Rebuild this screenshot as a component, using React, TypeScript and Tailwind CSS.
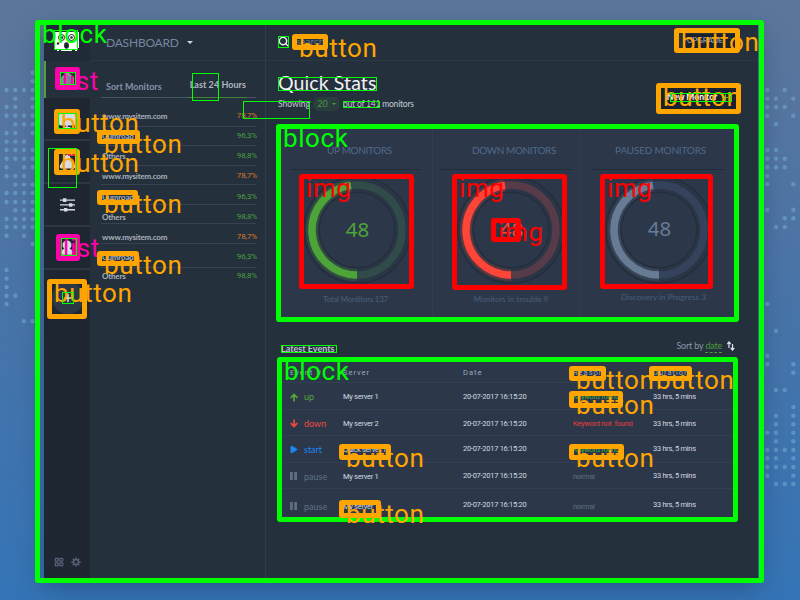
import React from "react";
import { ChevronRight, Home, LayoutGrid, Monitor, Play, Plus, Search, TriangleAlert, UserRound } from "lucide-react";

type Box = { x: number; y: number; r: number; b: number; label: string; color: string };

const GREEN = "#00ff00";
const ORANGE = "#ffa500";
const RED = "#ff0000";
const PINK = "#ff00aa";

const box = (x: number, y: number, r: number, b: number, label: string, color: string): Box => ({ x, y, r, b, label, color });

const boxes: Box[] = [
  box(35, 20, 764, 583, "block", GREEN),
  box(276, 124, 739, 322, "block", GREEN),
  box(277, 357, 738, 522, "block", GREEN),
  box(299, 174, 414, 289, "img", RED),
  box(452, 174, 567, 290, "img", RED),
  box(600, 174, 713, 289, "img", RED),
  box(491, 218, 521, 242, "img", RED),
  box(55, 67, 80, 90, "list", PINK),
  box(56, 234, 80, 261, "list", PINK),
  box(54, 109, 80, 134, "button", ORANGE),
  box(54, 149, 80, 175, "button", ORANGE),
  box(97, 130, 140, 144, "button", ORANGE),
  box(97, 190, 138, 205, "button", ORANGE),
  box(97, 251, 139, 266, "button", ORANGE),
  box(47, 279, 87, 319, "button", ORANGE),
  box(292, 34, 328, 50, "button", ORANGE),
  box(674, 28, 740, 53, "button", ORANGE),
  box(656, 83, 741, 114, "button", ORANGE),
  box(339, 444, 391, 460, "button", ORANGE),
  box(339, 500, 381, 518, "button", ORANGE),
  box(569, 366, 606, 381, "button", ORANGE),
  box(649, 366, 692, 381, "button", ORANGE),
  box(569, 391, 623, 408, "button", ORANGE),
  box(569, 444, 624, 460, "button", ORANGE),
];

const thinBoxes: number[][] = [
  [54, 30, 78, 50], [60, 72, 76, 85], [58, 113, 77, 129], [48, 148, 77, 188],
  [61, 238, 77, 256], [62, 292, 74, 304], [192, 73, 219, 101], [243, 101, 310, 119],
  [278, 36, 289, 48], [278, 77, 377, 91], [343, 101, 380, 108], [670, 93, 732, 102], [281, 345, 337, 353],
];

const L = [6.6, 15.3, 24, 32.6];
const R = [767.3, 776, 784.7, 793.3];
const leftRows: [number, number[]][] = [
  [72.7, [3]], [81.3, [3]], [90, [0, 1, 2, 3]], [98.6, [1, 3]], [107, [0, 1, 3]], [115.7, [0, 1, 2, 3]],
  [124.3, [1, 2, 3]], [133, [0, 1, 3]], [141.6, [0, 1, 2]], [150, [0, 1, 2, 3]], [158.7, [0, 1, 2, 3]],
  [167.3, [0, 2, 3]], [176, [0, 1, 2]], [184.6, [1, 2, 3]], [193, [0, 1, 2, 3]], [202, [0, 1, 2, 3]],
  [210.3, [1, 2, 3]], [219, [0, 1, 2, 3]], [227, [0, 1, 2, 3]], [235.7, [0, 2]], [244, [3]],
  [270, [0]], [278.6, [0]], [287, [0]], [295.7, [0, 1]], [304, [0]], [321.3, [2, 3]],
];
const rightRows: [number, number[]][] = [
  [90, [0, 2]], [98.6, [0, 1, 3]], [107, [0, 1, 2]], [115.7, [0, 3]], [124.3, [1]], [150, [0, 1]],
  [158.7, [0, 1, 2]], [167.3, [0, 1, 2]], [176, [0]], [184.3, [0, 3]], [209.7, [0, 3]], [218.3, [2, 3]],
  [227, [1, 2]], [304, [0]], [331, [1]], [355.7, [0]], [364.3, [0, 3]], [372.7, [3]], [390, [1, 2]],
  [407, [3]], [415.7, [1, 3]], [424.3, [1, 3]], [432.7, [0, 1, 3]], [441.3, [1, 3]], [450, [0, 1, 2, 3]],
  [458.3, [0, 1, 3]], [467, [0, 1, 2, 3]], [475.7, [0, 3]], [484, [1, 2, 3]],
];

function Dots() {
  const draw = (rows: [number, number[]][], cols: number[]) =>
    rows.flatMap(([y, ids]) => ids.map((i) => <circle key={`${y}-${cols[i]}`} cx={cols[i]} cy={y} r="2.2" />));
  return (
    <svg className="absolute inset-0 blur-[0.6px]" width="800" height="600" fill="#78b6d8" fillOpacity="0.5">
      {draw(leftRows, L)}
      {draw(rightRows, R)}
    </svg>
  );
}

const sites = [
  { name: "www.mysitem.com", pct: "78,7%", h: 21, mid: 10 },
  { name: "Gumroad", pct: "96,3%", h: 19, mid: 9 },
  { name: "Others", pct: "98,8%", h: 20, mid: 10 },
  { name: "www.mysitem.com", pct: "78,7%", h: 19, mid: 10 },
  { name: "Gumroad", pct: "96,3%", h: 20, mid: 12 },
  { name: "Others", pct: "98,8%", h: 19, mid: 12 },
  { name: "www.mysitem.com", pct: "78,7%", h: 20, mid: 13 },
  { name: "Gumroad", pct: "96,3%", h: 24, mid: 13 },
  { name: "Others", pct: "98,8%", h: 20, mid: 8 },
];

function Gauge({ color, track, cy }: { color: string; track: string; cy: number }) {
  return (
    <svg width="114" height="114" viewBox="0 0 114 114" className="block">
      <circle cx="57" cy="57" r="45.5" fill="none" stroke="#242f3d" strokeWidth="17" />
      <circle cx="57" cy="57" r="45.5" fill="none" stroke="#2a3545" strokeWidth="14" />
      <circle cx="57" cy="57" r="45" fill="none" stroke={track} strokeWidth="7.5" />
      <path d="M57 102 A45 45 0 0 1 51 12.4" fill="none" stroke={color} strokeOpacity="0.22" strokeWidth="12" />
      <path d="M57 102 A45 45 0 0 1 51 12.4" fill="none" stroke={color} strokeWidth="7.5" />
      <text x="57.5" y={cy} textAnchor="middle" fontSize="20.5" fontFamily="'Noto Sans', sans-serif" fontWeight="400" fill={color}>48</text>
    </svg>
  );
}

const events = [
  { kind: "up", server: "My server 1", reason: "Keyword found", tone: "text-[#3fae3a]", h: 26.5, mid: 14, dmid: 14 },
  { kind: "down", server: "My server 2", reason: "Keyword not  found", tone: "text-[#e23c3c]", h: 26.5, mid: 14.5, dmid: 14 },
  { kind: "start", server: "Quick server 1", reason: "Keyword found", tone: "text-[#3fae3a]", h: 27, mid: 14, dmid: 13 },
  { kind: "pause", server: "My server 1", reason: "normal", tone: "text-[#5f6f83]", h: 26, mid: 14, dmid: 13 },
  { kind: "pause", server: "My server 1", reason: "normal", tone: "text-[#5f6f83]", h: 30, mid: 17.5, dmid: 16 },
];

const kindColor: Record<string, string> = {
  up: "text-[#55a63a]", down: "text-[#f2483e]", start: "text-[#1c86f2]", pause: "text-[#5f6f83]",
};

function EventIcon({ kind }: { kind: string }) {
  if (kind === "start") return <Play size={9} fill="currentColor" className="-ml-px" />;
  if (kind === "pause")
    return (
      <svg width="7" height="8" className="block"><path d="M0 0h2.800v8H0zM4.200 0H7v8H4.200z" fill="currentColor" /></svg>
    );
  return (
    <svg width="8" height="9" viewBox="0 0 8 8" className={`block ${kind === "down" ? "rotate-180" : "translate-y-px"}`}>
      <path d="M4 8V1.200M.700 4.400 4 1l3.300 3.400" fill="none" stroke="currentColor" strokeWidth="1.700" />
    </svg>
  );
}

function Cell({ mid, className, children }: { mid: number; className: string; children: React.ReactNode }) {
  return (
    <div className={`whitespace-pre leading-[10px] ${className}`} style={{ paddingTop: mid - 5 }}>{children}</div>
  );
}

function Sidebar() {
  const item = "flex shrink-0 items-center justify-center border-b-2 border-[#2c3744] text-[#d5dbe3]";
  return (
    <div className="flex w-[46px] shrink-0 flex-col bg-[#1e2631]">
      <div className="flex h-[36px] items-center justify-center bg-[#212b37]">
        <svg width="24" height="19" viewBox="0 0 24 19" className="-ml-px mt-[-4px]">
          <rect width="24" height="19" fill="#fff" />
          <circle cx="6.500" cy="5.500" r="3" fill="#fff" stroke="#1e2631" />
          <circle cx="16.500" cy="5.500" r="3" fill="#fff" stroke="#1e2631" />
          <circle cx="7" cy="5.500" r="1.300" fill="#1e2631" />
          <circle cx="16.500" cy="5.500" r="1.300" fill="#1e2631" />
          <circle cx="3" cy="11.500" r="1.200" fill="#1e2631" />
          <ellipse cx="11.500" cy="13.500" rx="2.400" ry="3.200" fill="#1e2631" />
          <path d="M0 17h2v2H0zM22 16h2v3h-2zM4 17h2v2H4zM17 17h3v2h-3z" fill="#1e2631" />
        </svg>
      </div>
      <div className="flex h-[37px] items-center justify-center border-l-2 border-[#4f9e38] bg-[#25303d] pr-0.5 text-[#9aa4b1]">
        <Home size={15} fill="#7a8391" />
      </div>
      <div className={`h-[43px] pt-1 ${item}`}><Monitor size={18} fill="#d5dbe3" /></div>
      <div className={`h-[43px] ${item}`}>
        <div className="relative">
          <TriangleAlert size={17} fill="#d5dbe3" stroke="#d5dbe3" />
          <div className="absolute -top-1 left-[9px] h-[7px] w-[8px] bg-[#e0322f] text-center font-[family-name:Roboto] text-[6px] leading-[7px] text-white">1</div>
        </div>
      </div>
      <div className={`h-[43px] ${item}`}>
        <svg width="15" height="14" viewBox="0 0 15 14" fill="currentColor">
          <path d="M0 1.500h15v1.300H0zM0 6.300h15v1.300H0zM0 11.100h15v1.300H0z" />
          <path d="M3 .300h3.400v3.600H3zM9 5.200h3.400v3.600H9zM4 10h3.400v3.600H4z" />
        </svg>
      </div>
      <div className={`h-[43px] ${item}`}><UserRound size={18} fill="#d5dbe3" /></div>
      <div className="ml-2 mt-[12px] flex h-[32px] w-[32px] items-center justify-center rounded-full bg-[#2d3846] text-[#d5dbe3]">
        <Plus size={12} strokeWidth={3} />
      </div>
      <div className="mb-[11px] mt-auto flex gap-[7px] pl-[10px] text-[#56637a]">
        <LayoutGrid size={10} strokeWidth={3} />
        <svg width="10" height="10" viewBox="0 0 10 10" fill="none" stroke="currentColor">
          <circle cx="5" cy="5" r="2.500" strokeWidth="1.500" />
          <path d="M5 .300v2M5 7.700v2M.300 5h2M7.700 5h2M1.700 1.700l1.300 1.300M7 7l1.300 1.300M8.300 1.700 7 3M3 7 1.700 8.300" strokeWidth="1.300" />
        </svg>
      </div>
    </div>
  );
}

function Monitors() {
  return (
    <div className="flex w-[175px] shrink-0 flex-col">
      <div className="flex h-[36px] items-center border-b border-[#2c3745] pl-[16px]">
        <span className="text-[12px] tracking-[-0.2px] text-[#76869f]">DASHBOARD</span>
        <span className="ml-2 h-0 w-0 border-x-[3px] border-t-[3px] border-x-transparent border-t-[#c5d8e8]" />
      </div>
      <div className="ml-[11px] mt-4 flex h-[20px] w-[155px] items-start justify-between pl-[5px] pr-[10px]">
        <span className="pt-[5px] text-[9px] font-bold leading-[10px] text-[#8491a6]">Sort Monitors</span>
        <span className="pt-[3px] text-[9px] font-bold leading-[10px] tracking-[0.05px] text-[#b0b7c1]">Last 24 Hours</span>
      </div>
      <div className="ml-[11px] flex h-px w-[155px] bg-[#485568]">
        <div className="ml-[87px] w-[59px] bg-[#438238]" />
      </div>
      <div className="ml-[11px] mt-2 flex w-[155px] flex-col">
        {sites.map((s, i) => (
          <div key={i} className={`flex justify-between ${i === 8 ? "" : "border-b border-[#364252]"}`} style={{ height: s.h }}>
            <Cell mid={s.mid} className="pl-px text-[8px] font-bold tracking-[-0.2px] text-[#a8b0bb]">{s.name}</Cell>
            <Cell mid={s.mid} className={`-mr-px font-[family-name:Roboto] text-[8px] tracking-[-0.15px] ${s.pct === "78,7%" ? "text-[#d87824]" : "text-[#4a9f3d]"}`}>{s.pct}</Cell>
          </div>
        ))}
      </div>
    </div>
  );
}

type StatProps = {
  title: string; caption: string; color: string; track: string; className: string;
  titleClass: string; gaugeClass: string; captionClass: string; cy: number;
};

function StatColumn(p: StatProps) {
  return (
    <div className={`flex shrink-0 flex-col items-center ${p.className}`}>
      <div className={`mt-[18px] whitespace-nowrap text-[10px] leading-[12px] text-[#526988] ${p.titleClass}`}>{p.title}</div>
      <div className="mt-[13px] h-px w-[131px] bg-[#222c39]" />
      <div className={`mt-[3px] ${p.gaugeClass}`}><Gauge color={p.color} track={p.track} cy={p.cy} /></div>
      <div className={`whitespace-nowrap leading-[10px] text-[#4a5d78] ${p.captionClass}`}>{p.caption}</div>
    </div>
  );
}

function Content() {
  const grid = "grid grid-cols-[14px_39px_120px_110px_80px_80px] pl-[11px]";
  return (
    <div className="flex min-w-0 flex-1 flex-col border-l border-[#303c4b]">
      <div className="flex h-[36px] shrink-0 items-center justify-between border-b border-[#2c3745] pl-[12px] pr-[23px]">
        <div className="flex items-center gap-[7px] pb-[3px] text-white">
          <Search size={11} strokeWidth={3} />
          <span className="text-[10px] text-[#66758a]">search</span>
        </div>
        <div className="flex h-[18px] items-center gap-1 bg-[#18212d] pb-[5px] pl-1 text-[8px] tracking-[-0.2px] text-[#a4afbd]">UPGRADE <ChevronRight size={8} className="text-[#4fa33b]" /></div>
      </div>
      <div className="flex h-[62px] shrink-0 justify-between pl-[12px] pr-5">
        <div className="flex flex-col">
          <div className="mt-[11px] whitespace-nowrap text-[19.500px] leading-[22px] tracking-[0.1px] text-[#f0f3f7]">Quick Stats</div>
          <div className="mt-[2px] flex h-4 items-center whitespace-nowrap text-[8.500px] text-[#c2c9d2]">
            <span>Showing</span>
            <span className="mx-[3px] flex h-[14px] w-[27px] items-center justify-center gap-1 rounded-full bg-[#2a3f3d] text-[9px] text-[#4a963d]">
              20<span className="h-0 w-0 border-x-2 border-t-2 border-x-transparent border-t-[#4fa33b]" />
            </span>
            <span className="tracking-[-0.2px]">out of 141 monitors</span>
          </div>
        </div>
        <div className="mt-[24px] flex h-[25px] w-[79px] items-center justify-center gap-1 whitespace-nowrap bg-[#18212d] text-[8.500px] font-bold text-white">
          New Monitor <Plus size={9} strokeWidth={3} className="text-[#4fc33b]" />
        </div>
      </div>
      <div className="ml-[13px] mt-[3px] flex h-[194px] w-[457px] shrink-0 bg-[#2c384a]">
        <StatColumn title="UP MONITORS" caption="Total Montitors 137" color="#4da438" track="#304b49" cy={64} className="w-[154px] border-r border-[#323e50]" titleClass="pl-2 tracking-[-0.35px]" gaugeClass="pl-[2px]" captionClass="mt-[7px] text-[8px] tracking-[-0.25px]" />
        <StatColumn title="DOWN MONITORS" caption="Monitors in trouble 9" color="#ff4438" track="#573b48" cy={64} className="w-[148px] border-r border-[#323e50]" titleClass="pl-[15px] tracking-[-0.4px]" gaugeClass="pl-[8px]" captionClass="mt-[7px] pl-[9px] text-[8px]" />
        <StatColumn title="PAUSED MONITORS" caption="Discovery in Progress 3" color="#677b95" track="#34435b" cy={62.5} className="w-[155px]" titleClass="pl-[4px] tracking-[-0.2px]" gaugeClass="" captionClass="mt-[5px] pl-[10px] text-[8.300px]" />
      </div>
      <div className="ml-[15px] mr-[23px] flex h-[39px] shrink-0 justify-between whitespace-nowrap">
        <span className="pt-[23px] text-[9px] font-bold leading-[11px] text-[#bcc4ce]">Latest Events</span>
        <div className="flex items-start pt-[20px] text-[9px] leading-[11px] text-[#8996a9]">
          <span className="tracking-[-0.2px]">Sort by</span>
          <span className="ml-[2px] h-[13px] border-b border-dashed border-[#4c9a3c] tracking-[-0.2px] text-[#4c9a3c]">date</span>
          <svg width="8" height="10" viewBox="0 0 8 10" className="ml-[5px] mt-px"><path d="M2 7V1M.300 3 2 1l1.700 2M5.500 3v6M3.800 7l1.700 2 1.700-2" fill="none" stroke="#dce5ef" strokeWidth="1.200" /></svg>
        </div>
      </div>
      <div className="ml-[13px] flex h-[161px] w-[457px] shrink-0 flex-col bg-[#2c384a] font-[family-name:Roboto]">
        <div className={`${grid} h-[24px] border-b border-[#323f51] text-[7.500px] tracking-[1px] text-[#9ba8b9]`}>
          <Cell mid={14} className="col-span-2">Event #</Cell>
          <Cell mid={14} className="">Server</Cell>
          <Cell mid={14} className="">Date</Cell>
          <Cell mid={14} className="">Reason</Cell>
          <Cell mid={14} className="">Duration</Cell>
        </div>
        {events.map((e, i) => (
          <div key={i} className={`${grid} text-[7.500px] tracking-[-0.28px] ${i === 4 ? "" : "border-b border-[#323f51]"}`} style={{ height: e.h }}>
            <Cell mid={e.mid} className={kindColor[e.kind]}><EventIcon kind={e.kind} /></Cell>
            <Cell mid={e.mid} className={`font-[family-name:Lato] text-[9px] tracking-normal ${kindColor[e.kind]}`}>{e.kind}</Cell>
            <Cell mid={e.mid} className="text-[#d3d9e1]">{e.server}</Cell>
            <Cell mid={e.dmid} className="text-[#d3d9e1]">20-07-2017 16:15:20</Cell>
            <Cell mid={e.mid} className={e.tone}>{e.reason}</Cell>
            <Cell mid={e.dmid} className="text-[#d3d9e1]">33 hrs, 5 mins</Cell>
          </div>
        ))}
      </div>
    </div>
  );
}

function Annotations() {
  return (
    <div className="pointer-events-none absolute inset-0">
      {boxes.map((a, i) => (
        <div key={i}>
          <div className="absolute rounded-[3px] border-[5px]" style={{ left: a.x, top: a.y, width: a.r - a.x, height: a.b - a.y, borderColor: a.color }} />
          <div className="absolute whitespace-nowrap font-[family-name:Roboto] text-[26px] leading-[26px] tracking-[0.6px]" style={{ left: a.x + 7, top: a.y + 1, color: a.color }}>{a.label}</div>
        </div>
      ))}
      {thinBoxes.map(([x, y, r, b], i) => (
        <div key={i} className="absolute border border-[#00ff00]" style={{ left: x, top: y, width: r - x, height: b - y }} />
      ))}
    </div>
  );
}

export default function App() {
  return (
    <div className="relative h-[600px] w-[800px] overflow-hidden bg-linear-to-b from-[#5c769b] via-[#4874a8] to-[#3474b6] font-[family-name:Lato] antialiased">
      <Dots />
      <div className="relative flex h-full w-full pb-[22px] pl-[44px] pr-[42px] pt-[25px]">
        <div className="flex flex-1 bg-[#25303d] shadow-[0_8px_24px_rgba(25,45,80,0.5)]">
          <Sidebar />
          <Monitors />
          <Content />
        </div>
      </div>
      <Annotations />
    </div>
  );
}
